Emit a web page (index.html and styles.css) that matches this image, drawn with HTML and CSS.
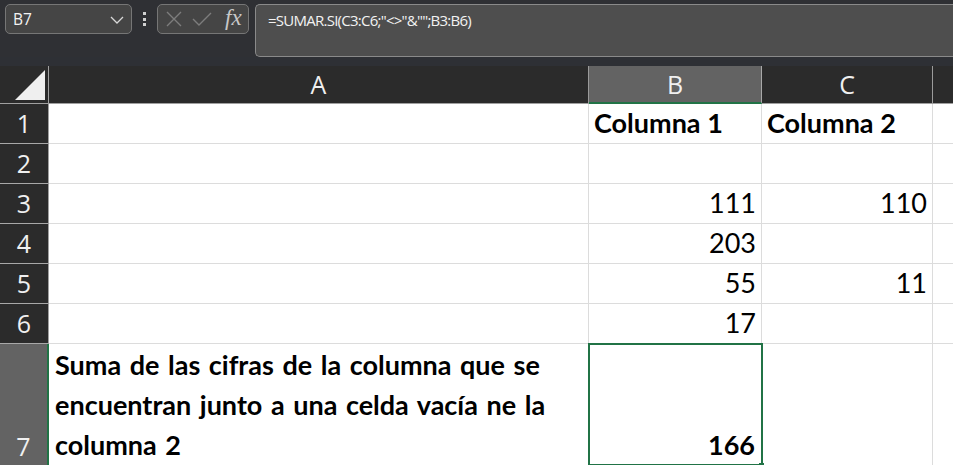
FILE: index.html
```html
<!DOCTYPE html>
<html lang="es">
<head>
<meta charset="utf-8">
<title>Excel</title>
<link rel="stylesheet" href="styles.css">
</head>
<body>
<div class="app">
  <div class="topbar">
    <div class="namebox">
      <span class="name">B7</span>
      <svg class="chev" width="14" height="8" viewBox="0 0 14 8"><path d="M1 1 L7 7 L13 1" fill="none" stroke="#d8d8d8" stroke-width="1.3"/></svg>
    </div>
    <div class="dots"><i></i><i></i><i></i></div>
    <div class="fbtns">
      <svg width="18" height="18" viewBox="0 0 18 18"><path d="M2 2 L16 16 M16 2 L2 16" stroke="#7d7d7d" stroke-width="1.4" fill="none"/></svg>
      <svg width="20" height="16" viewBox="0 0 20 16"><path d="M1 8 L7 14 L19 2" stroke="#7d7d7d" stroke-width="1.4" fill="none"/></svg>
      <span class="fx">fx</span>
    </div>
    <div class="fbar">=SUMAR.SI(C3:C6;"&lt;&gt;"&amp;"";B3:B6)</div>
  </div>
  <div class="gap"></div>
  <div class="sheet">
    <div class="corner"><svg width="32" height="32" viewBox="0 0 32 32"><path d="M31 1 L31 31 L1 31 Z" fill="#efefef"/></svg></div>
    <div class="ch">A</div>
    <div class="ch sel">B</div>
    <div class="ch">C</div>
    <div class="ch last"></div>

    <div class="rh">1</div>
    <div class="c"></div>
    <div class="c b">Columna 1</div>
    <div class="c b">Columna 2</div>
    <div class="c last"></div>

    <div class="rh">2</div>
    <div class="c"></div>
    <div class="c"></div>
    <div class="c"></div>
    <div class="c last"></div>

    <div class="rh">3</div>
    <div class="c"></div>
    <div class="c n">111</div>
    <div class="c n">110</div>
    <div class="c last"></div>

    <div class="rh">4</div>
    <div class="c"></div>
    <div class="c n">203</div>
    <div class="c n"></div>
    <div class="c last"></div>

    <div class="rh">5</div>
    <div class="c"></div>
    <div class="c n">55</div>
    <div class="c n">11</div>
    <div class="c last"></div>

    <div class="rh">6</div>
    <div class="c"></div>
    <div class="c n">17</div>
    <div class="c"></div>
    <div class="c last"></div>

    <div class="rh sel7">7</div>
    <div class="c b wrap">Suma de las cifras de la columna que se<br>encuentran junto a una celda vacía ne la<br>columna 2</div>
    <div class="c n b active">166</div>
    <div class="c"></div>
    <div class="c last"></div>
  </div>
</div>
</body>
</html>
```

FILE: styles.css
```css
* { box-sizing: border-box; }
html, body { margin: 0; padding: 0; }
body { background: #2f3034; width: 953px; height: 465px; overflow: hidden; }
.app { display: flex; flex-direction: column; height: 465px; }

.topbar { display: flex; align-items: flex-start; height: 57px; padding: 4px 0 0 5px; gap: 0; }
.namebox {
  width: 127px; height: 30px; background: #454545; border: 1px solid #767676; border-radius: 5px;
  display: flex; align-items: center; justify-content: space-between; padding: 0 7px 0 7px;
}
.name { color: #f2f2f2; font: 15.5px "Open Sans", sans-serif; }
.chev { margin-top: 1px; }
.dots { width: 25px; height: 30px; display: flex; flex-direction: column; align-items: center; justify-content: center; gap: 2.5px; }
.dots i { width: 3px; height: 3px; background: #d0d0d0; display: block; }
.fbtns {
  width: 92px; height: 30px; background: #454545; border: 1px solid #767676; border-radius: 5px;
  display: flex; align-items: center; padding: 0 0 0 7px; gap: 9px;
}
.fx { color: #c8c8c8; font: italic 23px "Liberation Serif", serif; margin-left: 4px; margin-top: -2px; letter-spacing: 0px; }
.fbar {
  margin-left: 6px; flex: 1; height: 53px; background: #4e4e4e; border: 1px solid #8a8a8a; border-right: none;
  border-radius: 5px 0 0 5px; color: #f2f2f2; font: 15px "Open Sans", sans-serif; letter-spacing: -0.75px; padding: 5px 0 0 12px;
}
.gap { height: 9px; background: #2e3035; }

.sheet {
  display: grid; flex: 1;
  grid-template-columns: 49px 540px 173px 171px 1fr;
  grid-template-rows: 38px repeat(6, 40px) 1fr;
  background: #fff;
}
.corner { background: #2b2b2b; border-right: 1px solid #a0a0a0; border-bottom: 1px solid #a0a0a0; display: flex; align-items: flex-end; justify-content: flex-end; padding: 0 2px 2px 0; }
.ch {
  background: #2b2b2b; color: #f0f0f0; font: 25px "Open Sans", sans-serif; line-height: 37px;
  text-align: center; border-right: 1px solid #9b9b9b; border-bottom: 1px solid #a0a0a0; padding-top: 0;
}
.ch.last { border-right: none; }
.ch.sel { background: #636363; border-bottom: 2px solid #217346; border-right-color: #a8a8a8; }
.rh {
  background: #2b2b2b; color: #f0f0f0; font: 25px "Open Sans", sans-serif; line-height: 38px;
  text-align: center; border-right: 1px solid #a0a0a0; border-bottom: 1px solid #a8a8a8;
}
.rh.sel7 { background: #636363; border-right: 2px solid #217346; display: flex; align-items: flex-end; justify-content: center; line-height: 1; padding-bottom: 6px; border-bottom: none; }

.c {
  border-right: 1px solid #dcdcdc; border-bottom: 1px solid #dcdcdc; color: #000;
  font: 27px "Lato", sans-serif; padding: 0 5px 4px 5px; display: flex; align-items: flex-end; white-space: nowrap;
}
.c.last { border-right: none; }
.c.b { font-weight: 700; }
.c.n { justify-content: flex-end; }
.c.wrap { white-space: normal; line-height: 40px; padding-bottom: 0; padding-left: 6px; display: block; align-self: end; border-bottom: none; word-spacing: 2px; }
.sheet > .c:nth-last-child(-n+4) { border-bottom: none; }
.c.active { outline: 2px solid #217346; outline-offset: -1px; position: relative; padding-right: 6px; }
.c.active::after { content: ""; position: absolute; right: -3px; bottom: -3px; width: 5px; height: 5px; background: #217346; }
```
